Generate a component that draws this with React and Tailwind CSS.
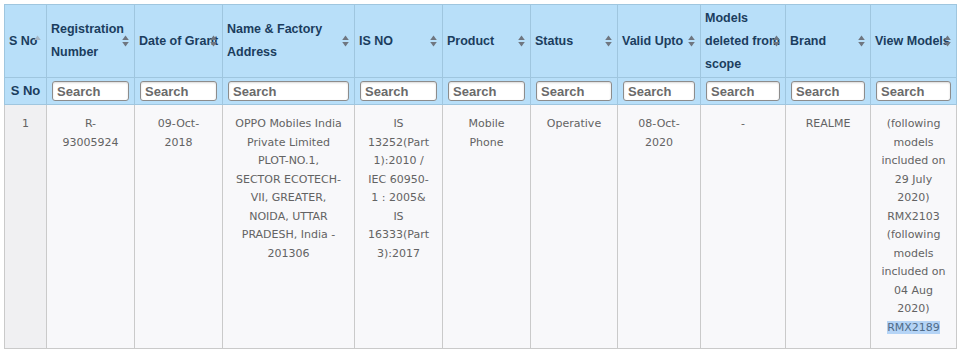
import React from "react";

const headers = [
  { lines: ["S No"], w: "w-[42px]", single: true },
  { lines: ["Registration", "Number"], w: "w-[88px]" },
  { lines: ["Date of Grant"], w: "w-[88px]" },
  { lines: ["Name & Factory", "Address"], w: "w-[132px]" },
  { lines: ["IS NO"], w: "w-[88px]" },
  { lines: ["Product"], w: "w-[88px]" },
  { lines: ["Status"], w: "w-[87px]" },
  { lines: ["Valid Upto"], w: "w-[83px]" },
  { lines: ["Models", "deleted from", "scope"], w: "w-[85px]" },
  { lines: ["Brand"], w: "w-[85px]" },
  { lines: ["View Models"], w: "w-[86px]" },
];

const row = [
  ["1"],
  ["R-", "93005924"],
  ["09-Oct-", "2018"],
  [
    "OPPO Mobiles India",
    "Private Limited",
    "PLOT-NO.1,",
    "SECTOR ECOTECH-",
    "VII, GREATER,",
    "NOIDA, UTTAR",
    "PRADESH, India -",
    "201306",
  ],
  ["IS", "13252(Part", "1):2010 /", "IEC 60950-", "1 : 2005&", "IS", "16333(Part", "3):2017"],
  ["Mobile", "Phone"],
  ["Operative"],
  ["08-Oct-", "2020"],
  ["-"],
  ["REALME"],
  [
    "(following",
    "models",
    "included on",
    "29 July",
    "2020)",
    "RMX2103",
    "(following",
    "models",
    "included on",
    "04 Aug",
    "2020)",
  ],
];

function SortIcon({ single }) {
  return (
    <svg
      width="7"
      height="12"
      viewBox="0 0 7 12"
      className="absolute right-[5px] top-1/2 -translate-y-1/2"
    >
      <path d="M3.5 0.5 L6.8 5 H0.2 Z" fill={single ? "#a7b6c4" : "#6f7680"} />
      {!single && <path d="M0.2 7 H6.8 L3.5 11.5 Z" fill="#6f7680" />}
    </svg>
  );
}

export default function App() {
  return (
    <div className="bg-white w-[960px] h-[352px] pt-[4px] pl-[4px] overflow-hidden">
      <table className="table-fixed w-[952px] border-collapse border border-[#c6c6c6]">
        <colgroup>
          {headers.map((h) => (
            <col key={h.lines[0]} className={h.w} />
          ))}
        </colgroup>
        <thead className="font-['Liberation_Sans',Arial,sans-serif] text-[#1b3d5e]">
          <tr className="h-[73px] bg-[#b8dff9]">
            {headers.map((h) => (
              <th
                key={h.lines[0]}
                className="relative border border-[#9fc6df] px-[4px] text-left align-middle text-[12.5px] font-bold leading-[23px]"
              >
                {h.lines.map((l) => (
                  <div key={l} className="whitespace-nowrap">
                    {l}
                  </div>
                ))}
                <SortIcon single={h.single} />
              </th>
            ))}
          </tr>
          <tr className="h-[27px] bg-[#b8dff9]">
            <th className="border border-[#9fc6df] text-center text-[13px] font-bold">S No</th>
            {headers.slice(1).map((h) => (
              <th key={h.lines[0]} className="border border-[#9fc6df] px-[5px]">
                <input
                  placeholder="Search"
                  className="block h-[20px] w-full rounded-[3px] border border-[#8c8c8c] bg-white px-[4px] text-[13px] font-bold text-[#666] shadow-[inset_0_1px_2px_rgba(0,0,0,0.15)] outline-none placeholder:text-[#6a6a6a]"
                />
              </th>
            ))}
          </tr>
        </thead>
        <tbody className="font-['DejaVu_Sans',Verdana,sans-serif] text-[11px] leading-[18.5px] text-[#636363]">
          <tr>
            {row.map((lines, i) => (
              <td
                key={i}
                className={
                  "border border-[#cacaca] px-[4px] pt-[10px] pb-[11px] text-center align-top " +
                  (i === 0 ? "bg-[#f0f0f2]" : "bg-[#f8f8fa]")
                }
              >
                {lines.map((l, j) => (
                  <div key={j} className="whitespace-nowrap">
                    {l}
                  </div>
                ))}
                {i === 10 && (
                  <div>
                    <span className="bg-[#b5d4f6] text-[#4f6b88]">RMX2189</span>
                  </div>
                )}
              </td>
            ))}
          </tr>
        </tbody>
      </table>
    </div>
  );
}
